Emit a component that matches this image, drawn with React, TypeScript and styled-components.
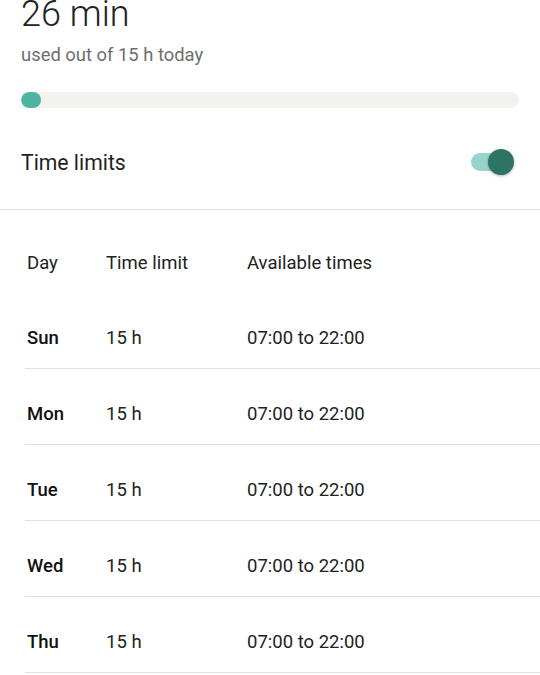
import styled, { createGlobalStyle } from "styled-components";

const GlobalStyle = createGlobalStyle`
  html, body {
    margin: 0;
    padding: 0;
    background: #fff;
    font-family: Roboto, "Noto Sans", sans-serif;
    color: #212121;
    overflow: hidden;
  }
`;

const Page = styled.div`
  width: 540px;
  display: flex;
  flex-direction: column;
`;

const Summary = styled.section`
  padding: 0 21px;
  display: flex;
  flex-direction: column;
`;

const Used = styled.h1`
  margin: -4px 0 0;
  font-size: 36px;
  line-height: 36px;
  font-weight: 300;
  color: #222;
`;

const Caption = styled.p`
  margin: 13px 0 0;
  font-size: 18.4px;
  line-height: 20px;
  color: #6e6e6e;
`;

const Track = styled.div`
  margin-top: 27px;
  height: 16px;
  width: 498px;
  border-radius: 8px;
  background: #f3f2ef;
  overflow: hidden;
`;

const Fill = styled.div`
  height: 100%;
  min-width: 20px;
  border-radius: 8px;
  background: #4fb5a3;
`;

const SettingRow = styled.div`
  margin-top: 36px;
  margin-bottom: 29px;
  height: 36px;
  padding: 0 26px 0 21px;
  display: flex;
  align-items: center;
  justify-content: space-between;
`;

const SettingLabel = styled.span`
  font-size: 21.2px;
  color: #1f1f1f;
`;

const Switch = styled.div<{ on?: boolean }>`
  position: relative;
  width: 43px;
  height: 26px;

  &::before {
    content: "";
    position: absolute;
    left: 0;
    top: 4px;
    width: 34px;
    height: 18px;
    border-radius: 9px;
    background: ${({ on }) => (on ? "#97d5ca" : "#ccc")};
  }

  &::after {
    content: "";
    position: absolute;
    top: 0;
    left: ${({ on }) => (on ? "17px" : "0")};
    width: 26px;
    height: 26px;
    border-radius: 50%;
    background: ${({ on }) => (on ? "#2e7464" : "#f5f5f5")};
    box-shadow: 0 1px 3px rgba(0, 0, 0, 0.3);
  }
`;

const Divider = styled.hr`
  margin: 0;
  border: 0;
  border-top: 1px solid #e2e2e2;
`;

const Table = styled.div`
  display: flex;
  flex-direction: column;
`;

const Row = styled.div<{ header?: boolean }>`
  margin-left: 25px;
  padding: ${({ header }) => (header ? "43px 0 20px 2px" : "35px 0 20px 2px")};
  display: grid;
  grid-template-columns: 79px 141px 1fr;
  font-size: 18.5px;
  line-height: 20px;
  color: #222;
  border-bottom: ${({ header }) => (header ? "none" : "1px solid #e2e2e2")};
`;

const DayCell = styled.span<{ bold?: boolean }>`
  font-weight: ${({ bold }) => (bold ? 500 : 400)};
  color: ${({ bold }) => (bold ? "#111" : "#222")};
`;

const Cell = styled.span``;

const days = ["Sun", "Mon", "Tue", "Wed", "Thu"];

export default function App() {
  const usedMin = 26;
  const limitMin = 15 * 60;
  const pct = (usedMin / limitMin) * 100;

  return (
    <Page>
      <GlobalStyle />
      <Summary>
        <Used>26 min</Used>
        <Caption>used out of 15 h today</Caption>
        <Track>
          <Fill style={{ width: `${pct}%` }} />
        </Track>
      </Summary>
      <SettingRow>
        <SettingLabel>Time limits</SettingLabel>
        <Switch on />
      </SettingRow>
      <Divider />
      <Table>
        <Row header>
          <DayCell>Day</DayCell>
          <Cell>Time limit</Cell>
          <Cell>Available times</Cell>
        </Row>
        {days.map((d) => (
          <Row key={d}>
            <DayCell bold>{d}</DayCell>
            <Cell>15 h</Cell>
            <Cell>07:00 to 22:00</Cell>
          </Row>
        ))}
      </Table>
    </Page>
  );
}
